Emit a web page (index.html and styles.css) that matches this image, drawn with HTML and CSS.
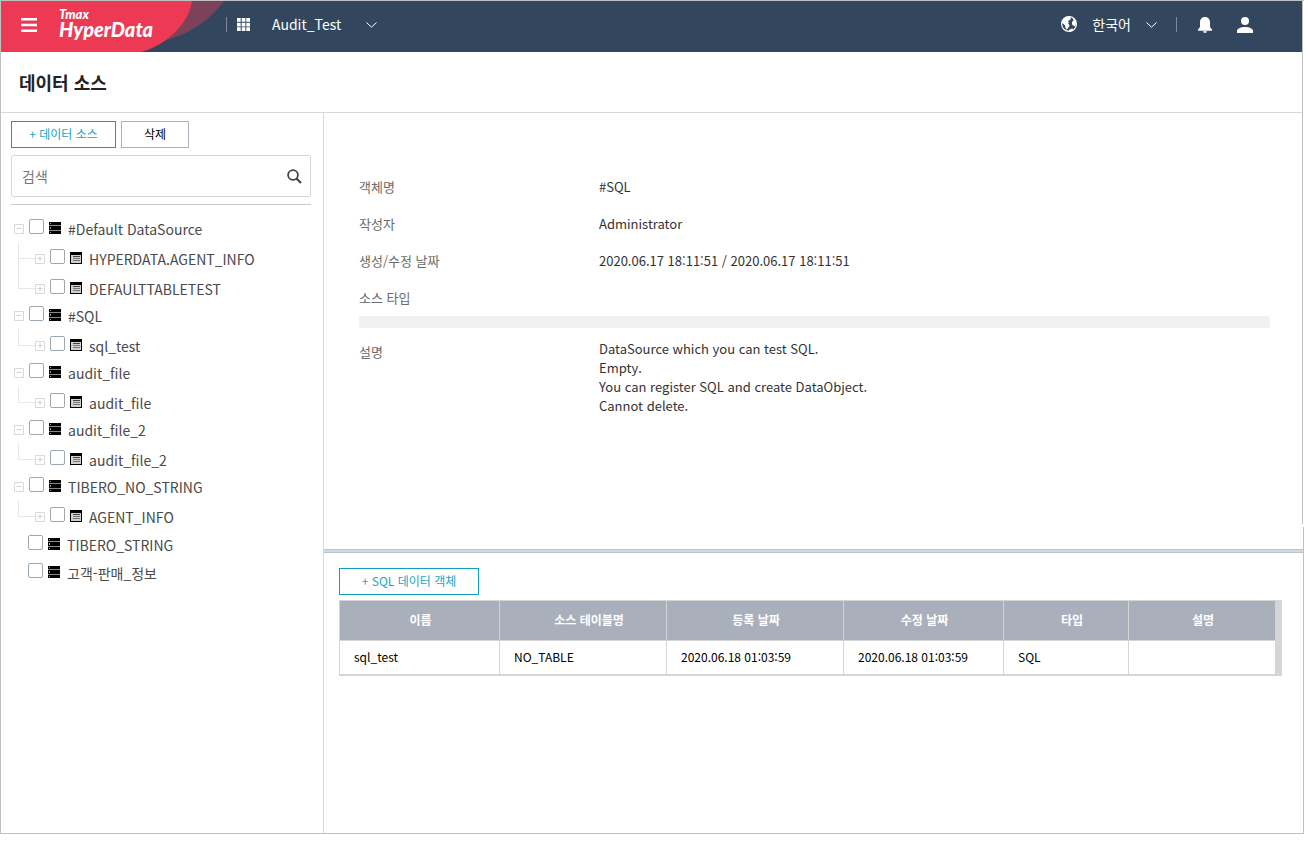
FILE: index.html
```html
<!DOCTYPE html>
<html lang="ko">
<head>
<meta charset="utf-8">
<title>Tmax HyperData</title>
<link rel="stylesheet" href="styles.css">
</head>
<body>
<svg class="defs" aria-hidden="true">
  <symbol id="server" viewBox="0 0 12 12">
    <path fill="#000" d="M0 0h12v12H0z"/>
    <path fill="#888" d="M0 3h12v1H0zM0 8h12v1H0z"/>
    <path fill="#999" d="M1 1h1v1H1zM1 5h1v2H1zM1 10h1v1H1z"/>
  </symbol>
  <symbol id="sheet" viewBox="0 0 12 12">
    <path fill="#000" d="M0 0h12v12H0z"/>
    <path fill="#d0d0d0" d="M1 3h10v8H1z"/>
    <path fill="#444" d="M3 4h7v1H3z"/>
    <path fill="#777" d="M3 6h7v1H3zM3 8h7v1H3z"/>
  </symbol>
  <symbol id="minus" viewBox="0 0 10 10">
    <path fill="#fff" stroke="#d9d9d9" d="M.5.5h9v9h-9z"/><path stroke="#d2d2d2" d="M2.500 4.500h5"/>
  </symbol>
  <symbol id="plus" viewBox="0 0 10 10">
    <path fill="#fff" stroke="#d9d9d9" d="M.5.5h9v9h-9z"/><path stroke="#d2d2d2" d="M2.500 4.500h5M5 2v5"/>
  </symbol>
</svg>
<div class="frame">
  <header class="topbar">
    <svg class="swoosh" viewBox="0 0 224 51" aria-hidden="true">
      <path fill="#7d415a" d="M150 0h73C210 18 188 34 161 40L130 51z"/>
      <path fill="#ee3954" d="M0 0h191C188 22 166 44 140 51H0z"/>
    </svg>
    <button class="icon-button menu" aria-label="메뉴">
      <svg width="16" height="14" viewBox="0 0 16 14"><path fill="#fff" d="M0 0h16v2.400H0zM0 5.800h16v2.400H0zM0 11.600h16V14H0z"/></svg>
    </button>
    <a class="logo" href="#"><span class="logo-top">Tmax</span><span class="logo-main">HyperData</span></a>
    <span class="bar"></span>
    <button class="icon-button apps" aria-label="앱">
      <svg width="13" height="13" viewBox="0 0 13 13"><path fill="#fff" d="M0 0h3.700v3.700H0zM4.700 0h3.700v3.700H4.700zM9.300 0H13v3.700H9.300zM0 4.700h3.700v3.700H0zM4.700 4.700h3.700v3.700H4.700zM9.300 4.700H13v3.700H9.300zM0 9.300h3.700V13H0zM4.700 9.300h3.700V13H4.700zM9.300 9.300H13V13H9.300z"/></svg>
    </button>
    <button class="picker project">Audit_Test
      <svg class="chevron" viewBox="0 0 11 6"><path fill="none" stroke="#fff" d="M.5.5l5 4.700 5-4.700"/></svg>
    </button>
    <span class="spacer"></span>
    <button class="picker language">
      <svg width="16" height="16" viewBox="0 0 16 16"><circle cx="8" cy="8" r="7.400" fill="none" stroke="#fff" stroke-width="1.200"/><path fill="#fff" d="M.5 8C.5 4 3.500 1 8 .5L9.800 1.500 9.500 3.500 7 5 8 6.500 7 7.500 8.500 9 8 11 6.500 12.500 6 14 4.500 12 4 9.500 1.500 7zM8.500 13.500l3-1 .500 2C10 15.500 9 15.500 7.500 15.500zM12 2.500L13.500 3.500 15 6.500 14.500 10.500 13 10 11 8.500 11 6 12.500 4.500z"/></svg>
      <span class="language-name">한국어</span>
      <svg class="chevron" viewBox="0 0 11 6"><path fill="none" stroke="#fff" d="M.5.5l5 4.700 5-4.700"/></svg>
    </button>
    <span class="bar"></span>
    <button class="icon-button bell" aria-label="알림">
      <svg width="14" height="16" viewBox="0 0 14 16"><path fill="#fff" d="M7 0c3 0 5 2.200 5 5.500V10l2 2.500v1.200H0v-1.200L2 10V5.500C2 2.200 4 0 7 0zM5 14.300h4C8.800 15.500 8 16 7 16s-1.800-.5-2-1.700z"/></svg>
    </button>
    <button class="icon-button user" aria-label="사용자">
      <svg width="16" height="16" viewBox="0 0 16 16"><circle cx="8" cy="4" r="4" fill="#fff"/><path fill="#fff" d="M0 16v-2c0-2.500 4-4 8-4s8 1.500 8 4v2z"/></svg>
    </button>
  </header>

  <div class="page-title"><h1>데이터 소스</h1></div>

  <div class="workspace">
    <aside class="sidebar">
      <div class="actions">
        <button class="btn btn-primary add-source">+ 데이터 소스</button>
        <button class="btn btn-plain">삭제</button>
      </div>
      <div class="search">
        <input type="text" placeholder="검색" aria-label="검색">
        <button class="icon-button" aria-label="찾기">
          <svg width="15" height="15" viewBox="0 0 15 15"><circle cx="6" cy="6" r="4.900" fill="none" stroke="#444" stroke-width="1.800"/><path stroke="#444" stroke-width="2.200" d="M9.500 9.500l4.500 4.500"/></svg>
        </button>
      </div>
      <ul class="tree">
        <li>
          <div class="node"><svg class="toggle"><use href="#minus"/></svg><label><input type="checkbox"><svg class="kind"><use href="#server"/></svg><span>#Default DataSource</span></label></div>
          <ul>
            <li class="node child"><svg class="toggle"><use href="#plus"/></svg><label><input type="checkbox"><svg class="kind"><use href="#sheet"/></svg><span>HYPERDATA.AGENT_INFO</span></label></li>
            <li class="node child"><svg class="toggle"><use href="#plus"/></svg><label><input type="checkbox"><svg class="kind"><use href="#sheet"/></svg><span>DEFAULTTABLETEST</span></label></li>
          </ul>
        </li>
        <li>
          <div class="node"><svg class="toggle"><use href="#minus"/></svg><label><input type="checkbox"><svg class="kind"><use href="#server"/></svg><span>#SQL</span></label></div>
          <ul>
            <li class="node child"><svg class="toggle"><use href="#plus"/></svg><label><input type="checkbox"><svg class="kind"><use href="#sheet"/></svg><span>sql_test</span></label></li>
          </ul>
        </li>
        <li>
          <div class="node"><svg class="toggle"><use href="#minus"/></svg><label><input type="checkbox"><svg class="kind"><use href="#server"/></svg><span>audit_file</span></label></div>
          <ul>
            <li class="node child"><svg class="toggle"><use href="#plus"/></svg><label><input type="checkbox"><svg class="kind"><use href="#sheet"/></svg><span>audit_file</span></label></li>
          </ul>
        </li>
        <li>
          <div class="node"><svg class="toggle"><use href="#minus"/></svg><label><input type="checkbox"><svg class="kind"><use href="#server"/></svg><span>audit_file_2</span></label></div>
          <ul>
            <li class="node child"><svg class="toggle"><use href="#plus"/></svg><label><input type="checkbox"><svg class="kind"><use href="#sheet"/></svg><span>audit_file_2</span></label></li>
          </ul>
        </li>
        <li>
          <div class="node"><svg class="toggle"><use href="#minus"/></svg><label><input type="checkbox"><svg class="kind"><use href="#server"/></svg><span>TIBERO_NO_STRING</span></label></div>
          <ul>
            <li class="node child"><svg class="toggle"><use href="#plus"/></svg><label><input type="checkbox"><svg class="kind"><use href="#sheet"/></svg><span>AGENT_INFO</span></label></li>
          </ul>
        </li>
        <li class="node leaf"><label><input type="checkbox"><svg class="kind"><use href="#server"/></svg><span>TIBERO_STRING</span></label></li>
        <li class="node leaf"><label><input type="checkbox"><svg class="kind"><use href="#server"/></svg><span>고객-판매_정보</span></label></li>
      </ul>
    </aside>

    <main class="content">
      <section class="details">
        <dl>
          <dt>객체명</dt><dd>#SQL</dd>
          <dt>작성자</dt><dd>Administrator</dd>
          <dt>생성/수정 날짜</dt><dd>2020.06.17 18:11:51 / 2020.06.17 18:11:51</dd>
          <dt>소스 타입</dt><dd></dd>
        </dl>
        <div class="strip"></div>
        <dl class="description">
          <dt>설명</dt>
          <dd>DataSource which you can test SQL.<br>Empty.<br>You can register SQL and create DataObject.<br>Cannot delete.</dd>
        </dl>
      </section>
      <div class="splitter"></div>
      <section class="objects">
        <button class="btn btn-primary add-object">+ SQL 데이터 객체</button>
        <div class="grid">
          <table>
            <colgroup><col class="c1"><col class="c2"><col class="c3"><col class="c4"><col class="c5"><col></colgroup>
            <thead><tr><th>이름</th><th class="shifted">소스 테이블명</th><th>등록 날짜</th><th>수정 날짜</th><th class="shifted">타입</th><th>설명</th></tr></thead>
            <tbody><tr><td>sql_test</td><td>NO_TABLE</td><td>2020.06.18 01:03:59</td><td>2020.06.18 01:03:59</td><td>SQL</td><td></td></tr></tbody>
          </table>
        </div>
      </section>
    </main>
  </div>
</div>
</body>
</html>
```
FILE: styles.css
```css
* { box-sizing: border-box; }
body, h1, ul, dl, dd { margin: 0; padding: 0; }
body { font-family: "Noto Sans CJK KR", sans-serif; font-size: 14px; color: #333; background: #fff; }
button, input { font: inherit; margin: 0; }
button { padding: 0; border: 0; background: none; cursor: pointer; }
ul { list-style: none; }
svg { display: block; flex: none; }
.defs { position: absolute; width: 0; height: 0; }

.frame {
  display: flex; flex-direction: column;
  min-height: calc(100vh - 8px); margin-right: 4px; padding-right: 1px;
  border: 1px solid #c0c0c0; border-right: 0;
  background:
    linear-gradient(#c0c0c0, #c0c0c0) right 1px top / 1px 523px no-repeat,
    linear-gradient(#c0c0c0, #c0c0c0) right 0 top 526px / 1px 100% no-repeat;
}

.topbar { position: relative; display: flex; align-items: center; height: 51px; margin-right: 1px; padding: 0 49px 4px 20px; background: #32475d; color: #fff; }
.swoosh { position: absolute; left: 0; top: 0; width: 224px; height: 51px; }
.topbar > :not(.swoosh) { position: relative; }
.icon-button { display: flex; align-items: center; justify-content: center; }
.logo { display: flex; flex-direction: column; width: 167px; margin: 0 0 4px 22px; color: #fff; text-decoration: none; font-family: Lato, sans-serif; font-style: italic; font-weight: 900; }
.logo-top { font-size: 13px; line-height: 13px; }
.logo-main { font-size: 20px; line-height: 16px; }
.bar { width: 1px; height: 15px; background: #7d8894; }
.apps { margin-left: 10px; }
.picker { display: flex; align-items: center; padding-bottom: 1px; color: #fff; }
.chevron { width: 11px; height: 6px; margin-top: 2px; }
.project { margin-left: 22px; gap: 25px; }
.spacer { flex: 1; }
.language { margin-right: 19px; }
.language-name { margin: 0 15px; }
.bell { margin-left: 21px; }
.user { margin-left: 25px; }

.page-title { display: flex; align-items: center; height: 61px; margin-right: 1px; padding-left: 18px; border-bottom: 1px solid #d3dade; }
h1 { font-size: 18px; line-height: 26px; font-weight: 700; color: #222; }

.workspace { display: flex; flex: 1; }
.sidebar { flex: none; width: 323px; padding: 8px 12px 20px 10px; border-right: 1px solid #d3d9dd; }
.actions { display: flex; gap: 5px; }
.btn { display: block; height: 27px; padding-bottom: 2px; font-size: 12px; line-height: 17px; text-align: center; background: #fff; }
.btn-primary { border: 1px solid #0fa0bd; color: #16a5c3; }
.btn-plain { width: 68px; border: 1px solid #adb0be; color: #000; }
.add-source { width: 105px; }
.search { display: flex; height: 42px; margin-top: 7px; padding: 0 8px 0 10px; border: 1px solid #d3dade; border-radius: 2px; }
.search input { flex: 1; min-width: 0; padding: 0; border: 0; outline: 0; background: none; color: #333; }
.search input::placeholder { color: #777; opacity: 1; }
.tree { margin-top: 7px; padding-top: 10px; border-top: 1px solid #c8c8c8; color: #4a4a4a; }

.node { display: flex; align-items: center; height: 27px; padding-left: 3px; }
.node label { display: flex; align-items: center; line-height: 20px; }
.node input { appearance: none; width: 15px; height: 15px; margin: 0 5px 5px; border: 1px solid #9aa8b3; border-radius: 2px; background: #fff; }
.toggle { width: 10px; height: 10px; }
.kind { width: 12px; height: 12px; margin: 0 7px 2px 0; }
.child { height: 30px; padding: 3px 0 0 24px; background: linear-gradient(#e8e8e8, #e8e8e8) 7px 16px / 17px 1px no-repeat, linear-gradient(#e8e8e8, #e8e8e8) 7px 0 / 1px 16px no-repeat; }
.child:not(:last-child) { background-size: 17px 1px, 1px 100%; }
.leaf { height: 28px; padding: 2px 0 0 12px; }

.content { display: flex; flex: 1; flex-direction: column; min-width: 0; }
.details { min-height: 436px; padding: 55px 33px 20px 35px; font-size: 13px; }
.details dl { display: grid; grid-template-columns: 240px 1fr; line-height: 37px; }
dt { color: #6b6b6b; }
dd { min-width: 0; color: #333; }
.strip { height: 12px; border-radius: 2px; background: #f1f1f1; }
.details .description { margin-top: 11px; line-height: 19px; }
.description dt { padding-top: 3px; }
.splitter { height: 4px; border: solid #b9c3d2; border-width: 1px 0; background: #d3dade; }
.objects { padding: 15px 21px 20px 15px; }
.add-object { width: 140px; }
.grid { margin-top: 5px; padding-right: 6px; border-bottom: 1px solid #d5d5d5; background: #d5d5d5; }
table { width: 100%; border-collapse: collapse; table-layout: fixed; font-size: 12px; line-height: 18px; color: #000; }
th, td { border: 1px solid #d5d5d5; }
th { height: 40px; padding: 0 0 2px 2px; background: #aab0bb; color: #fff; font-weight: 700; }
th.shifted { padding-left: 12px; }
td { height: 34px; padding: 0 14px 2px; background: #fff; }
.c1, .c4 { width: 160px; }
.c2 { width: 167px; }
.c3 { width: 177px; }
.c5 { width: 125px; }
```
